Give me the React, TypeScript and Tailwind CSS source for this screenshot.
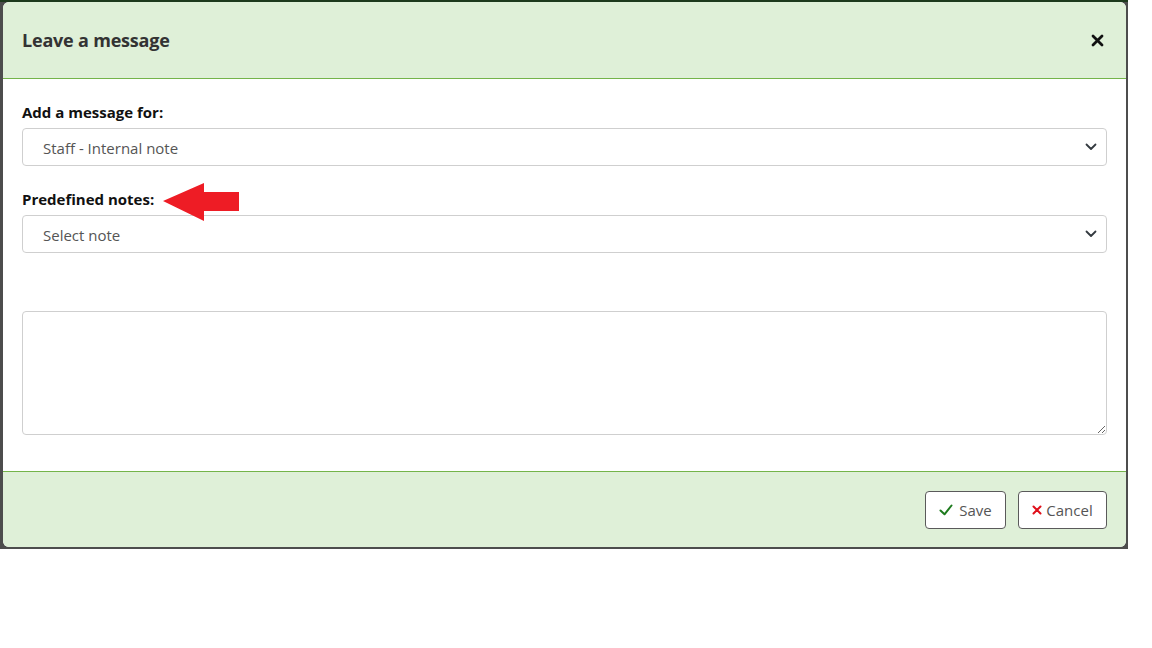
import React from "react";

function Chevron() {
  return (
    <svg className="pointer-events-none absolute right-[10px] top-1/2 -translate-y-1/2" width="12" height="8" viewBox="0 0 12 8" fill="none">
      <path d="M1.5 1.5 6 6l4.5-4.5" stroke="#343a40" strokeWidth="1.8" strokeLinecap="round" strokeLinejoin="round" />
    </svg>
  );
}

function SelectBox({ value }: { value: string }) {
  return (
    <div className="relative">
      <select
        defaultValue={value}
        className="block h-[38px] w-full appearance-none rounded-[4px] border border-[#cfcfcf] bg-white pl-[20px] pt-[2px] text-[15px] text-[#555] outline-none"
      >
        <option>{value}</option>
      </select>
      <Chevron />
    </div>
  );
}

export default function App() {
  return (
    <div className="h-[648px] w-[1152px] bg-white font-['Open_Sans','Noto_Sans',sans-serif]">
      <div className="h-[549px] w-[1128px] border-t-2 border-[#1d3a1d] bg-[#4d4d4d] pl-[3px] pr-[2px] pb-[2px]">
        <div className="flex h-[545px] flex-col overflow-hidden rounded-[6px] bg-white">
          <div className="flex h-[77px] shrink-0 items-center justify-between border-b border-[#74b44a] bg-[#dff0d8] pl-[19px] pr-[22px]">
            <h4 className="text-[18px] font-bold tracking-[-0.2px] text-[#333]">Leave a message</h4>
            <svg width="13" height="13" viewBox="0 0 13 13">
              <path d="M2 2l9 9M11 2l-9 9" stroke="#111" strokeWidth="2.8" strokeLinecap="round" />
            </svg>
          </div>

          <div className="relative flex-1 px-[19px] pt-[22px]">
            <label className="block text-[15px] font-bold leading-[22px] text-[#111]">Add a message for:</label>
            <div className="mt-[5px]">
              <SelectBox value="Staff - Internal note" />
            </div>

            <label className="mt-[22px] block text-[15px] font-bold leading-[22px] text-[#111]">Predefined notes:</label>
            <div className="mt-[5px]">
              <SelectBox value="Select note" />
            </div>

            <textarea className="mt-[58px] block h-[124px] w-full rounded-[4px] border border-[#cfcfcf] bg-white outline-none" />

            <svg className="absolute left-[157px] top-[104px]" width="80" height="38" viewBox="0 0 80 38">
              <path d="M3 18 44 0v9h35v19H44v10z" fill="#ee1c25" />
            </svg>
          </div>

          <div className="flex h-[76px] shrink-0 items-start justify-end gap-[12px] border-t border-[#74b44a] bg-[#dff0d8] pr-[19px] pt-[19px]">
            <button className="flex h-[38px] w-[81px] items-center justify-center gap-[6px] rounded-[4px] border border-[#5a5a5a] bg-white text-[15px] text-[#555]">
              <svg width="14" height="12" viewBox="0 0 14 12">
                <path d="M1.5 6.5l4 3.8L12.5 1.5" stroke="#1e7b1e" strokeWidth="2" fill="none" strokeLinecap="round" strokeLinejoin="round" />
              </svg>
              Save
            </button>
            <button className="flex h-[38px] w-[89px] items-center justify-center gap-[4px] rounded-[4px] border border-[#5a5a5a] bg-white text-[15px] text-[#555]">
              <svg width="10" height="10" viewBox="0 0 10 10">
                <path d="M1.5 1.5l7 7M8.5 1.5l-7 7" stroke="#e0101b" strokeWidth="2" strokeLinecap="round" />
              </svg>
              Cancel
            </button>
          </div>
        </div>
      </div>
    </div>
  );
}
